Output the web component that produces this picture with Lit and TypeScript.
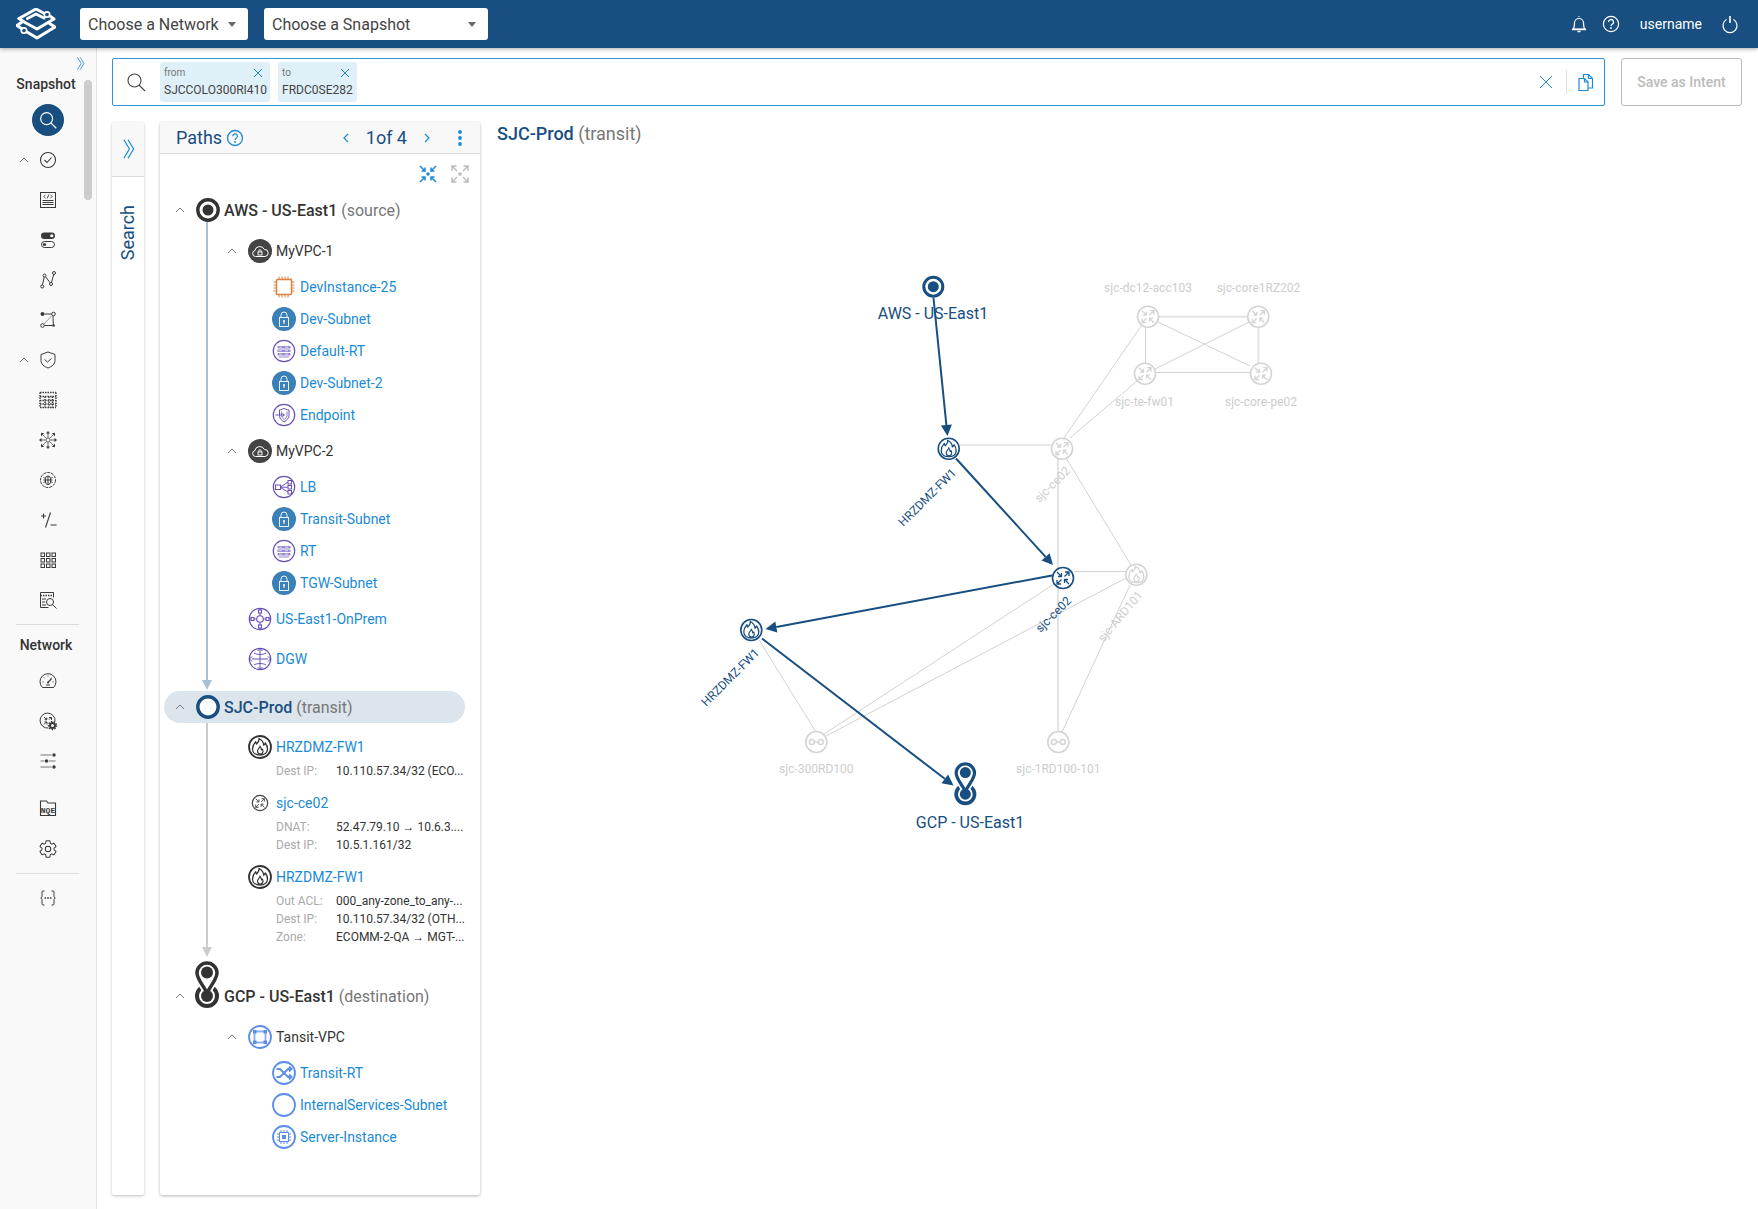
import { LitElement, html, css, svg, nothing } from "lit";
import { customElement } from "lit/decorators.js";

const NAVY = "#184e80";

const arrowsGlyph = svg`<g fill="none" stroke="currentColor" stroke-width="1.300"><path d="M6 6l4.500 4.500M10.500 7v3.500H7"/><path d="M13.500 10.500L18 6M14 6h4v4"/><path d="M10.500 13.500L6 18M6 14v4h4"/><path d="M18 18l-4.500-4.500M17 13.500h-3.500V17"/></g>`;
const routerGlyph = svg`<circle cx="12" cy="12" r="10.500" fill="#fff" stroke="currentColor" stroke-width="1.600"/>${arrowsGlyph}`;
const flame = svg`<path d="M11 3.500c.5 2.500-1 4-2.500 5.500-.5-.8-.8-1.500-.8-2.300C5.500 9 4.500 11.500 4.500 14c0 3.800 3.300 6 7.500 6s7.500-2.200 7.500-6c0-2.500-1-4.500-2.200-6-.3 1-.8 1.700-1.600 2.200C15.700 7.500 13.500 5 11 3.500z" fill="none" stroke="currentColor" stroke-width="1.300" stroke-linejoin="round"/><path d="M12 11c.3 1.500-2.500 2.700-2.500 5 0 1.800 1.200 3 2.800 3s2.700-1.200 2.700-3c0-.8-.3-1.500-.7-2-.2.500-.5.800-.9 1-.1-1.500-.7-3-1.400-4z" fill="none" stroke="currentColor" stroke-width="1.100" stroke-linejoin="round"/>`;
const fireGlyph = svg`<circle cx="12" cy="12" r="10.500" fill="#fff" stroke="currentColor" stroke-width="1.600"/>${flame}`;
const switchGlyph = svg`<circle cx="12" cy="12" r="10.500" fill="#fff" stroke="currentColor" stroke-width="1.600"/><g fill="none" stroke="currentColor" stroke-width="1.500"><circle cx="7.500" cy="12" r="2.500"/><circle cx="16.500" cy="12" r="2.500"/><path d="M10 12h4"/></g>`;

function pinGlyph() {
  return svg`<circle cx="12" cy="35" r="10" fill="#fff" stroke="currentColor" stroke-width="4"/>
  <path d="M12 2C6.500 2 2 6.500 2 12c0 6 6 12 10 20 4-8 10-14 10-20C22 6.500 17.500 2 12 2z" fill="#fff" stroke="#fff" stroke-width="7"/>
  <circle cx="12" cy="35" r="6" fill="currentColor"/>
  <path d="M12 2C6.500 2 2 6.500 2 12c0 6 6 12 10 20 4-8 10-14 10-20C22 6.500 17.500 2 12 2z" fill="#fff" stroke="currentColor" stroke-width="3.500"/><circle cx="12" cy="11.500" r="6" fill="currentColor"/>`;
}

const P = "#6a4fb8";
const B = "#5b8dea";
const treeIcons: Record<string, unknown> = {
  cloud: svg`<circle cx="12" cy="12" r="12" fill="#444"/><path d="M7.500 17.500a3 3 0 0 1-.6-5.900A5 5 0 0 1 16.400 10.500a3.500 3.500 0 0 1 .6 7z" fill="none" stroke="#fff" stroke-width="1"/><rect x="10" y="13" width="4" height="3" fill="none" stroke="#fff" stroke-width=".9"/><path d="M10.800 13v-1a1.200 1.200 0 0 1 2.400 0v1" fill="none" stroke="#fff" stroke-width=".9"/>`,
  chip: svg`<rect x="4.500" y="4.500" width="15" height="15" rx="1" fill="#fff" stroke="#e0803e" stroke-width="1.500"/><path d="M7 1.500v3M10 1.500v3M13 1.500v3M16 1.500v3M19 3v1M7 19.500v3M10 19.500v3M13 19.500v3M16 19.500v3M1.500 7h3M1.500 10h3M1.500 13h3M1.500 16h3M19.500 7h3M19.500 10h3M19.500 13h3M19.500 16h3" stroke="#e0803e" stroke-width="1"/>`,
  subnet: svg`<circle cx="12" cy="12" r="12" fill="#3b80b9"/><rect x="7.500" y="10.500" width="9" height="9" fill="none" stroke="#fff" stroke-width=".9"/><path d="M9 10.500V8a3 3 0 0 1 6 0v2.500" fill="none" stroke="#fff" stroke-width=".9"/><circle cx="12" cy="14" r="1" fill="#fff"/><path d="M12 14v3" stroke="#fff"/>`,
  rt: svg`<circle cx="12" cy="12" r="10.700" fill="#fff" stroke="${P}" stroke-width="1.200"/><path d="M5.500 7h13v2.500h-13zM5.500 10.500h13V13h-13zM5.500 14h13v2.500h-13z" fill="#9b8cd0"/><path d="M7 8.200h3M13 8.200h3M7 11.700h3M13 11.700h3M7 15.200h3M13 15.200h3" stroke="#fff" stroke-width=".6"/><path d="M7 18h10" stroke="${P}" stroke-width=".7"/>`,
  endpoint: svg`<circle cx="12" cy="12" r="10.700" fill="#fff" stroke="${P}" stroke-width="1.200"/><path d="M7.500 7c2-.4 3.500-1 4.500-1.800 1 .8 2.500 1.400 5 1.800v5.500c0 3-2.500 5-5 6.300-2.500-1.300-4.500-3.300-4.500-6.300z" fill="none" stroke="${P}" stroke-width="1"/><path d="M9.500 8.500v4c0 1.800 1.300 3 2.700 3.800 1.300-.8 2.800-2 2.800-3.800v-4" fill="none" stroke="${P}" stroke-width=".8"/><path d="M3.500 12H12M10.500 10.500L12.500 12l-2 1.500" fill="none" stroke="${P}" stroke-width="1"/>`,
  lb: svg`<circle cx="12" cy="12" r="10.700" fill="#fff" stroke="${P}" stroke-width="1.200"/><g fill="none" stroke="${P}" stroke-width="1"><rect x="3.500" y="10" width="5" height="4.500"/><rect x="16" y="5.500" width="3.500" height="3.500"/><rect x="16" y="10.500" width="3.500" height="3.500"/><rect x="16" y="15.500" width="3.500" height="3.500"/><path d="M8.500 12L16 7M8.500 12.200H16M8.500 12.500L16 17"/></g>`,
  onprem: svg`<circle cx="12" cy="12" r="10.700" fill="#fff" stroke="${P}" stroke-width="1.200"/><g fill="#fff" stroke="${P}" stroke-width="1.100"><path d="M12 2v20M2 12h20"/><circle cx="12" cy="12" r="3.300"/><rect x="10.500" y="3" width="3" height="3"/><rect x="10.500" y="18" width="3" height="3"/><rect x="3" y="10.500" width="3" height="3"/><rect x="18" y="10.500" width="3" height="3"/></g>`,
  dgw: svg`<circle cx="12" cy="12" r="10.700" fill="#fff" stroke="${P}" stroke-width="1.200"/><g fill="none" stroke="${P}" stroke-width="1"><path d="M12 1.500v21M4 12h16"/><path d="M9.500 4L12 1.500 14.500 4M9.500 20L12 22.500 14.500 20M4 9.500L1.500 12 4 14.500M20 9.500l2.500 2.500-2.500 2.500"/><path d="M6 6c3 2 9 2 12 0M6 18c3-2 9-2 12 0"/></g>`,
  fire: svg`<circle cx="12" cy="12" r="11" fill="#fff" stroke="#333" stroke-width="1.800"/><g color="#333">${flame}</g>`,
  router: svg`<circle cx="12" cy="12" r="7.700" fill="#fff" stroke="#444" stroke-width="1.200"/><g color="#444" transform="translate(3.400 3.400) scale(.72)">${arrowsGlyph}</g>`,
  vpc: svg`<circle cx="12" cy="12" r="11" fill="#fff" stroke="${B}" stroke-width="1.800"/><rect x="6.500" y="6.500" width="11" height="11" fill="none" stroke="${B}" stroke-width="1.800" opacity=".75"/><path d="M5 5h3.500v3.500H5zM15.500 5H19v3.500h-3.500zM5 15.500h3.500V19H5zM15.500 15.500H19V19h-3.500z" fill="${B}"/>`,
  shuffle: svg`<circle cx="12" cy="12" r="11" fill="#fff" stroke="${B}" stroke-width="1.800"/><g fill="none" stroke="${B}" stroke-width="1.800"><path d="M4.500 8h3.500l8 8h3.500M4.500 16h3.500l8-8h3.500M17 5.500L19.500 8 17 10.500M17 13.500l2.500 2.500-2.500 2.500"/></g>`,
  blank: svg`<circle cx="12" cy="12" r="11" fill="#fff" stroke="${B}" stroke-width="1.800"/>`,
  server: svg`<circle cx="12" cy="12" r="11" fill="#fff" stroke="${B}" stroke-width="1.800"/><rect x="7.500" y="7.500" width="9" height="9" fill="#fff" stroke="${B}" stroke-width="1"/><rect x="10" y="10" width="4" height="4" fill="${B}"/><path d="M9 5v2M12 5v2M15 5v2M9 17v2M12 17v2M15 17v2M5 9h2M5 12h2M5 15h2M17 9h2M17 12h2M17 15h2" stroke="${B}" stroke-width="1"/>`,
  source: svg`<circle cx="12" cy="12" r="10.200" fill="#fff" stroke="#333" stroke-width="3.400"/><circle cx="12" cy="12" r="5.500" fill="#333"/>`,
  transit: svg`<circle cx="12" cy="12" r="10.200" fill="#fff" stroke="${NAVY}" stroke-width="3.400"/>`,
};

const I = "#3a3a3a";
const sideIcons: Record<string, unknown> = {
  check: svg`<circle cx="12" cy="12" r="7.500" fill="none" stroke="${I}" stroke-width="1.100"/><path d="M8.500 12l2.500 2.500 4.500-5" fill="none" stroke="${I}" stroke-width="1.100"/>`,
  code: svg`<rect x="4.500" y="4.500" width="15" height="15" fill="none" stroke="${I}"/><path d="M9.500 6.800L7.800 8.500l1.700 1.700M14.500 6.800l1.700 1.700-1.700 1.700M12.800 6.500l-1.600 4" fill="none" stroke="${I}" stroke-width=".9"/><path d="M6.500 12.500h11M6.500 14.500h11M6.500 16.500h11" stroke="${I}" stroke-width="1"/>`,
  toggles: svg`<rect x="5" y="4.500" width="14" height="6.500" rx="3.250" fill="${I}"/><circle cx="15.800" cy="7.750" r="1.600" fill="#fff"/><rect x="5.500" y="13.500" width="13" height="6" rx="3" fill="none" stroke="${I}"/><circle cx="8.500" cy="16.500" r="1.600" fill="${I}"/>`,
  path: svg`<g fill="none" stroke="${I}" stroke-width="1"><circle cx="6.200" cy="18.500" r="1.500"/><circle cx="8.500" cy="7.500" r="1.500"/><circle cx="15" cy="16" r="1.500"/><circle cx="18" cy="5" r="1.500"/><path d="M6.500 17l1.700-8M9.500 8.700l4.600 6M15.500 14.500l2.200-8"/></g>`,
  topo: svg`<circle cx="6.500" cy="6" r="2" fill="${I}"/><g fill="#f9f9f9" stroke="${I}" stroke-width="1"><circle cx="17.500" cy="6" r="1.800"/><circle cx="6.500" cy="17.500" r="1.800"/></g><circle cx="17.500" cy="17.500" r="1.300" fill="${I}"/><path d="M8.500 6h7M17 8l.300 9M8.500 17.500h8" stroke="${I}" fill="none"/><path d="M8 16l8-8.500" stroke="#999" fill="none"/>`,
  shield: svg`<path d="M12 4l7 2.500v6c0 3.500-3 6-7 7.500-4-1.500-7-4-7-7.500v-6z" fill="none" stroke="${I}"/><path d="M8.500 11.500l3 2.500 4-3.500" fill="none" stroke="${I}"/>`,
  matrix: svg`<path d="M4 4.500h16M4 19.500h16M4 4.500v15M20 4.500v15M4 8.500h16M4 12.500h16M4 16h16M9 8.500v11M13 8.500v11M16.500 8.500v11" fill="none" stroke="${I}" stroke-width="1.400" stroke-dasharray="1.500 1"/>`,
  flake: svg`<g fill="none" stroke="#666" stroke-width="1"><circle cx="12" cy="12" r="2"/><path d="M12 4v6M12 14v6M4 12h6M14 12h6M6.500 6.500l4 4M17.500 6.500l-4 4M6.500 17.500l4-4M17.500 17.500l-4-4"/></g><g fill="${I}"><path d="M12 3l2 2.500h-4zM12 21l-2-2.500h4zM3 12l2.500-2v4zM21 12l-2.500 2v-4z"/><path d="M5 5h3.200L5 8.200zM19 5v3.200L15.800 5zM5 19v-3.200L8.200 19zM19 19h-3.200L19 15.800z"/></g>`,
  bug: svg`<circle cx="12" cy="12" r="7.500" fill="none" stroke="${I}" stroke-dasharray="3 .8"/><g fill="none" stroke="${I}"><rect x="9.500" y="8" width="5" height="8.500" rx="2.500"/><path d="M9.500 12h5M12 8v8.500M7.500 9.500l2 1M16.500 9.500l-2 1M7.500 12h2M14.500 12h2M7.500 14.500l2-1M16.500 14.500l-2-1"/></g>`,
  plusminus: svg`<path d="M14.500 4.500L9.500 19.500M5 8h5M7.500 5.500v5M14.500 17h6" fill="none" stroke="${I}" stroke-width="1.100"/>`,
  grid: svg`<g fill="none" stroke="${I}"><rect x="5" y="5" width="3.500" height="3.500"/><rect x="10.500" y="5" width="3.500" height="3.500"/><rect x="16" y="5" width="3.500" height="3.500"/><rect x="5" y="10.500" width="3.500" height="3.500"/><rect x="10.500" y="10.500" width="3.500" height="3.500"/><rect x="16" y="10.500" width="3.500" height="3.500"/><rect x="5" y="16" width="3.500" height="3.500"/><rect x="10.500" y="16" width="3.500" height="3.500"/><rect x="16" y="16" width="3.500" height="3.500"/></g>`,
  tablesearch: svg`<path d="M17.500 9.500V4.500h-13v15h8" fill="none" stroke="${I}"/><path d="M4.500 7.500h13" stroke="${I}" stroke-width="1.400" stroke-dasharray="1.500 1"/><path d="M6 11h4M6 14h3M6 17h4" stroke="${I}"/><circle cx="14" cy="14" r="3.500" fill="#f9f9f9" stroke="${I}"/><path d="M16.500 16.500l4 4" stroke="${I}"/>`,
  gauge: svg`<path d="M6.500 18.500a8 8 0 1 1 11 0z" fill="none" stroke="${I}"/><path d="M12 13.500l3.500-4" stroke="${I}" stroke-width="1.200"/><path d="M6.500 13h1M8 8.500l.7.700M12 6.500v1M16 8.500l-.7.700M16.500 13h1M10 16h4" stroke="${I}"/><circle cx="12" cy="13.500" r="1" fill="${I}"/>`,
  routergear: svg`<path d="M12.500 19A7.500 7.500 0 1 1 19 12.500" fill="none" stroke="${I}"/><path d="M8 8l2.800 2.800M10.800 8.600v2.200H8.600M15.500 8L13 10.500M13 8.500h2.500V11M8 15.500L10.500 13M8.500 13h2.500v2.500" fill="none" stroke="${I}"/><circle cx="16.500" cy="16.500" r="2.500" fill="none" stroke="${I}" stroke-width="2"/><circle cx="16.500" cy="16.500" r="4" fill="none" stroke="${I}" stroke-width="1.400" stroke-dasharray="1.400 1.400"/>`,
  sliders: svg`<path d="M4.500 6h11M4.500 12h4M12.500 12h7M4.500 18h11" stroke="#777" stroke-width="1.200"/><circle cx="18" cy="6" r="1.700" fill="${I}"/><circle cx="10.500" cy="12" r="1.700" fill="${I}"/><circle cx="18" cy="18" r="1.700" fill="${I}"/>`,
  nqe: svg`<path d="M4.500 5h6l1.500 2h7.500v12.500h-15z" fill="none" stroke="${I}" stroke-width="1.100"/><text x="12" y="16.500" text-anchor="middle" font-family="Liberation Mono" font-weight="700" font-size="8" fill="${I}">NQE</text>`,
  gear: svg`<g transform="translate(1.800 1.800) scale(.85)"><path d="M19.140 12.940c.04-.3.06-.61.06-.94 0-.32-.02-.64-.07-.94l2.030-1.580c.18-.14.23-.41.12-.61l-1.920-3.320c-.12-.22-.37-.29-.59-.22l-2.390.96c-.5-.38-1.030-.7-1.620-.94L14.400 2.810c-.04-.24-.24-.41-.48-.41h-3.840c-.24 0-.43.17-.47.41L9.250 5.350c-.59.24-1.130.57-1.620.94L5.240 5.330c-.22-.08-.47 0-.59.22L2.740 8.870c-.12.21-.08.47.12.61l2.030 1.580c-.05.3-.09.63-.09.94s.02.64.07.94l-2.030 1.580c-.18.14-.23.41-.12.61l1.920 3.320c.12.22.37.29.59.22l2.390-.96c.5.38 1.030.7 1.620.94l.36 2.540c.05.24.24.41.48.41h3.840c.24 0 .44-.17.47-.41l.36-2.540c.59-.24 1.130-.56 1.620-.94l2.390.96c.22.08.47 0 .59-.22l1.920-3.320c.12-.22.07-.47-.12-.61z" fill="none" stroke="${I}" stroke-width="1.200"/><circle cx="12" cy="12" r="3.200" fill="none" stroke="${I}" stroke-width="1.200"/></g>`,
  braces: svg`<path d="M8.500 5H7c-.6 0-1 .4-1 1v4.500L4.800 12 6 13.500V18c0 .6.400 1 1 1h1.500M15.500 5H17c.6 0 1 .4 1 1v4.500l1.200 1.500-1.200 1.500V18c0 .6-.4 1-1 1h-1.500" fill="none" stroke="${I}"/><path d="M8.500 12h7" stroke="${I}" stroke-width="1.300" stroke-dasharray="1.600 1.100"/>`,
};

interface Row { k: string; t?: string; s?: string; icon?: string; c?: string; rows?: [string, string][]; }

const tree: Row[] = [
  { k: "root", c: "m-a", icon: "source", t: "AWS - US-East1", s: "(source)" },
  { k: "group", c: "m6", icon: "cloud", t: "MyVPC-1" },
  { k: "leaf", c: "m4", icon: "chip", t: "DevInstance-25" },
  { k: "leaf", icon: "subnet", t: "Dev-Subnet" },
  { k: "leaf", icon: "rt", t: "Default-RT" },
  { k: "leaf", icon: "subnet", t: "Dev-Subnet-2" },
  { k: "leaf", icon: "endpoint", t: "Endpoint" },
  { k: "group", c: "m4", icon: "cloud", t: "MyVPC-2" },
  { k: "leaf", c: "m4", icon: "lb", t: "LB" },
  { k: "leaf", icon: "subnet", t: "Transit-Subnet" },
  { k: "leaf", icon: "rt", t: "RT" },
  { k: "leaf", icon: "subnet", t: "TGW-Subnet" },
  { k: "device", c: "m4", icon: "onprem", t: "US-East1-OnPrem" },
  { k: "device", c: "m8", icon: "dgw", t: "DGW" },
  { k: "pill", c: "m16", icon: "transit", t: "SJC-Prod", s: "(transit)" },
  { k: "hop", c: "m9", icon: "fire", t: "HRZDMZ-FW1", rows: [["Dest IP:", "10.110.57.34/32 (ECO..."]] },
  { k: "hop", c: "m8", icon: "router", t: "sjc-ce02", rows: [["DNAT:", "52.47.79.10 → 10.6.3...."], ["Dest IP:", "10.5.1.161/32"]] },
  { k: "hop", c: "m8", icon: "fire", t: "HRZDMZ-FW1", rows: [["Out ACL:", "000_any-zone_to_any-..."], ["Dest IP:", "10.110.57.34/32 (OTH..."], ["Zone:", "ECOMM-2-QA → MGT-..."]] },
  { k: "dest", c: "m32", t: "GCP - US-East1", s: "(destination)" },
  { k: "group", c: "m6", icon: "vpc", t: "Tansit-VPC" },
  { k: "leaf", c: "m4", icon: "shuffle", t: "Transit-RT" },
  { k: "leaf", icon: "blank", t: "InternalServices-Subnet" },
  { k: "leaf", icon: "server", t: "Server-Instance" },
];

const DIM = "#d4d4d4";
const dimNodes: [string, number, number][] = [
  ["r", 1148, 316.7], ["r", 1258.3, 316.7], ["r", 1145, 373.7], ["r", 1261, 373.7],
  ["r", 1062, 448.7], ["f", 1136.3, 574.7], ["s", 816.3, 742], ["s", 1058.3, 742],
];
const activeNodes: [string, number, number][] = [["f", 948.7, 448.7], ["r", 1063, 578], ["f", 751.3, 630]];
const thinLines = [
  [1145.5, 327, 1145.5, 363], [1158, 322, 1250, 366], [1249, 322, 1155, 369], [1155, 372.5, 1251, 372.5],
  [1141, 326, 1064, 438], [1137, 381, 1070, 438], [960, 445, 1052, 445], [1066, 458, 1131, 565],
  [1074, 571.5, 1126, 571.5], [1126, 578, 826, 736], [1054, 584, 824, 734], [759, 640, 816, 732], [1130, 585, 1062, 732],
];
const thickLines = [[1158, 316.7, 1248, 316.7], [1258.3, 327, 1258.3, 363], [1058, 459, 1058, 732]];
const arrows = [[933.5, 298, 947.5, 436], [956, 458.5, 1053, 565], [1052, 575.5, 765.5, 629], [762, 638.5, 953.5, 785.5]];
const dimLabels: [string, number, number][] = [
  ["sjc-dc12-acc103", 1148, 289], ["sjc-core1RZ202", 1258.5, 289], ["sjc-te-fw01", 1144.5, 403], ["sjc-core-pe02", 1261, 403],
  ["sjc-300RD100", 816.3, 770], ["sjc-1RD100-101", 1058.3, 770],
];
const rotLabels: [string, number, number, string, number][] = [
  ["HRZDMZ-FW1", 928, 498, "active", -45], ["sjc-ce02", 1053, 485, "dim", -45], ["HRZDMZ-FW1", 731, 678, "active", -45],
  ["sjc-ce02", 1054, 615, "active", -45], ["sjc-ARD101", 1121, 617, "dim", -50],
];

function arrow(a: number[]) {
  const [x1, y1, x2, y2] = a;
  const L = Math.hypot(x2 - x1, y2 - y1), ux = (x2 - x1) / L, uy = (y2 - y1) / L;
  const bx = x2 - ux * 11, by = y2 - uy * 11;
  return svg`<line x1=${x1} y1=${y1} x2=${bx} y2=${by} stroke=${NAVY} stroke-width="2"/>
  <polygon points="${x2},${y2} ${bx - uy * 5.5},${by + ux * 5.5} ${bx + uy * 5.5},${by - ux * 5.5}" fill=${NAVY}/>`;
}
const glyph = (k: string) => (k === "r" ? routerGlyph : k === "f" ? fireGlyph : switchGlyph);

const chevUp = html`<svg class="chev" viewBox="0 0 16 16"><path d="M4 10l4-4 4 4" fill="none" stroke="#777" stroke-width="1"/></svg>`;
const dbl = (c: string) => html`<svg class="dbl" viewBox="0 0 14 24"><path d="M2 2l6 10-6 10M6.500 2l6 10-6 10" fill="none" stroke=${c} stroke-width="1.300"/></svg>`;

@customElement("app-root")
export class AppRoot extends LitElement {
  static styles = css`
    :host { display: block; width: 1758px; height: 1209px; overflow: hidden; background: #fff; font-family: Roboto, "Liberation Sans", sans-serif; color: #333; }
    svg { display: block; }
    .top { height: 48px; background: #184e80; display: flex; align-items: center; position: relative; z-index: 2; box-shadow: 0 1px 4px rgba(0,0,0,.35); }
    .logo { width: 40px; height: 32px; margin-left: 16px; margin-right: 24px; }
    .select { height: 32px; background: #fff; border-radius: 3px; display: flex; align-items: center; justify-content: space-between; padding: 0 12px 0 8px; font-size: 16px; color: #444; box-sizing: border-box; }
    .select.a { width: 168px; margin-right: 16px; }
    .select.b { width: 224px; }
    .caret { width: 0; height: 0; border: 4.500px solid transparent; border-top: 5px solid #666; border-bottom: 0; }
    .top-right { margin-left: auto; display: flex; align-items: center; color: #fff; font-size: 14px; padding-right: 16px; }
    .top-right svg { width: 24px; height: 24px; }
    .username { margin: 0 16px 0 17px; }
    .bell { margin-right: 8px; }
    .body { display: flex; height: 1161px; }
    .side { width: 97px; flex: none; box-sizing: border-box; background: #f9f9f9; border-right: 1px solid #e4e4e4; position: relative; padding-top: 8px; }
    .side-toggle { height: 16px; display: flex; justify-content: flex-end; padding-right: 10px; }
    .side-toggle .dbl { width: 11px; height: 15px; }
    .side-title { font-size: 14px; font-weight: 500; height: 20px; line-height: 20px; margin-top: 2px; text-align: center; padding-right: 4px; color: #333; }
    .scrollbar { position: absolute; left: 84px; top: 32px; width: 8px; height: 120px; border-radius: 4px; background: #ccc; }
    .search-btn { width: 32px; height: 32px; border-radius: 50%; background: #184e80; margin: 10px 0 4px 32px; display: flex; align-items: center; justify-content: center; }
    .search-btn svg { width: 22px; height: 22px; }
    .side-row { height: 40px; display: grid; grid-template-columns: 16px 24px; column-gap: 4px; align-items: center; padding-left: 16px; }
    .chev { width: 16px; height: 16px; }
    .side-row svg.icon { width: 24px; height: 24px; }
    .side-row.s2 { margin-top: 7px; }
    .side-row.s3 { margin-top: 1px; }
    .divider { height: 1px; background: #ddd; margin: 4px 17px 4px 16px; }
    .side-net { font-size: 14px; font-weight: 500; height: 20px; line-height: 20px; text-align: center; padding-right: 4px; margin: 10px 0 6px; }
    .main { flex: 1; min-width: 0; padding: 10px 16px 0 15px; display: flex; flex-direction: column; }
    .search-row { display: flex; gap: 16px; height: 48px; }
    .searchbar { flex: 1; border: 1px solid #2a97d9; border-radius: 2px; display: flex; align-items: center; box-sizing: border-box; padding-left: 11px; }
    .searchbar > svg { width: 24px; height: 24px; }
    .chips { display: flex; gap: 8px; margin-left: 12px; }
    .chip { background: #dff0f9; border-radius: 3px; height: 40px; padding: 2px 3px 0 4px; box-sizing: border-box; font-size: 12px; line-height: 16px; color: #444; }
    .chip.to { width: 79px; }
    .chip-top { display: flex; justify-content: space-between; align-items: center; font-size: 10px; color: #777; height: 18px; }
    .chip-top svg { width: 12px; height: 12px; margin-right: 3px; }
    .bar-x { width: 16px !important; height: 16px !important; margin-left: auto; }
    .bar-sep { width: 1px; height: 24px; background: #ddd; margin: 0 9px 0 12px; }
    .bar-clip { width: 20px !important; height: 20px !important; margin-right: 8px; }
    .save { width: 121px; border: 1px solid #bbb; border-radius: 3px; box-sizing: border-box; display: flex; align-items: center; justify-content: center; font-size: 14px; font-weight: 500; color: #bbb; }
    .content { flex: 1; display: flex; gap: 16px; margin-top: 16px; margin-bottom: 14px; min-height: 0; }
    .tab { width: 32px; background: #fff; box-shadow: 0 1px 3px rgba(0,0,0,.25); border-radius: 2px; }
    .tab-top { height: 54px; background: #f8f8f8; border-bottom: 1px solid #ddd; display: flex; align-items: center; justify-content: center; }
    .tab-top .dbl { width: 13px; height: 24px; }
    .tab-label-wrap { display: flex; justify-content: center; }
    .tab-label { writing-mode: vertical-rl; transform: rotate(180deg); font-size: 18px; color: #184e80; margin: 28px 2px 0 0; line-height: 21px; }
    .panel { width: 320px; flex: none; box-shadow: 0 1px 3px rgba(0,0,0,.3); border-radius: 2px; background: #fff; display: flex; flex-direction: column; }
    .panel-head { height: 32px; box-sizing: border-box; background: #f8f8f8; border-bottom: 1px solid #ddd; display: flex; align-items: center; padding-left: 16px; font-size: 18px; color: #184e80; }
    .panel-head .q { width: 18px; height: 18px; margin-left: 4px; }
    .pager { margin-left: auto; display: flex; align-items: center; }
    .pager .c { width: 12px; height: 12px; }
    .pager .of { margin: 0 14px; }
    .pager .dots { width: 4px; height: 16px; margin: 0 18px 0 25px; }
    .tree { position: relative; flex: 1; }
    .tools { height: 38px; display: flex; justify-content: flex-end; align-items: flex-start; gap: 14px; padding: 11px 11px 0 0; box-sizing: border-box; }
    .tools svg { width: 18px; height: 18px; }
    .row { display: flex; align-items: center; position: relative; z-index: 1; }
    .row svg.ti { width: 24px; height: 24px; flex: none; }
    .row.root, .row.dest { height: 36px; padding-left: 12px; font-size: 16px; font-weight: 500; color: #333; }
    .row.pill { height: 32px; margin-left: 4px; width: 301px; padding-left: 8px; box-sizing: border-box; font-size: 16px; font-weight: 500; background: #dce4ec; border-radius: 16px; color: #184e80; }
    .row.group { height: 32px; padding-left: 64px; font-size: 14px; color: #333; }
    .row.leaf { height: 32px; padding-left: 112px; font-size: 14px; color: #1a8ad6; }
    .row.device { height: 32px; padding-left: 88px; font-size: 14px; color: #1a8ad6; }
    .row.hop { height: 30px; padding-left: 88px; font-size: 14px; color: #1a8ad6; }
    .row .chev { margin-right: 8px; flex: none; }
    .row .txt { margin-left: 4px; white-space: nowrap; }
    .row.dest .slot { width: 24px; height: 24px; flex: none; position: relative; }
    .pin { position: absolute; left: -1px; bottom: 0; width: 24px; height: 47px; color: #333; }
    .sub { font-weight: 400; color: #777; }
    .m-a { margin-top: 0; } .m4 { margin-top: 4px; } .m6 { margin-top: 7px; } .m8 { margin-top: 8px; } .m9 { margin-top: 9px; } .m16 { margin-top: 16px; } .m32 { margin-top: 32px; }
    .detail { display: grid; grid-template-columns: 60px auto; height: 18px; line-height: 18px; font-size: 12px; padding-left: 116px; white-space: nowrap; }
    .detail span:first-child { color: #aaa; }
    .detail span:last-child { color: #333; }
    .conn { position: absolute; left: 46px; width: 2px; z-index: 0; }
    .conn.one { top: 68px; height: 458px; background: #aac0d4; }
    .conn.two { top: 569px; height: 225px; background: #ccc; }
    .head { position: absolute; left: 41.5px; width: 0; height: 0; border-left: 5.5px solid transparent; border-right: 5.5px solid transparent; border-top: 10px solid; z-index: 0; }
    .head.one { top: 526px; border-top-color: #aac0d4; }
    .head.two { top: 793px; border-top-color: #ccc; }
    .graph { flex: 1; min-width: 0; display: flex; flex-direction: column; }
    .graph-title { height: 24px; line-height: 24px; padding-left: 1px; font-size: 18px; font-weight: 500; color: #184e80; }
    .graph-title .sub { font-size: 18px; }
    .canvas { width: 1245px; height: 1049px; overflow: visible; }
    .canvas text { font-family: Roboto, "Liberation Sans", sans-serif; }
    .lbl { font-size: 12px; text-anchor: middle; dominant-baseline: middle; }
    .lbl.dim { fill: #cdcdcd; }
    .lbl.active { fill: #184e80; }
    .big { font-size: 16px; text-anchor: middle; fill: #184e80; }
  `;

  private renderRow(r: Row) {
    const iconSvg = r.icon ? html`<svg class="ti" viewBox="0 0 24 24">${treeIcons[r.icon]}</svg>` : nothing;
    const chev = ["root", "group", "pill", "dest"].includes(r.k) ? chevUp : nothing;
    const icon = r.k === "dest"
      ? html`<span class="slot"><svg class="pin" viewBox="0 0 24 47">${pinGlyph()}</svg></span>`
      : iconSvg;
    return html`<div class="row ${r.k} ${r.c ?? ""}">${chev}${icon}<span class="txt">${r.t} ${r.s ? html`<span class="sub">${r.s}</span>` : nothing}</span></div>
    ${(r.rows ?? []).map((d) => html`<div class="detail"><span>${d[0]}</span><span>${d[1]}</span></div>`)}`;
  }

  private sideRow(icon: string, chev = false, cls = "") {
    return html`<div class="side-row ${cls}">${chev ? chevUp : html`<span></span>`}<svg class="icon" viewBox="0 0 24 24">${sideIcons[icon]}</svg></div>`;
  }

  render() {
    return html`
      <div class="top">
        <svg class="logo" viewBox="16 8 40 32">
          <g fill="none" stroke="#fff" stroke-width="3" stroke-linejoin="round" stroke-linecap="round">
            <path d="M19 18.500L36 9l7.500 4"/>
            <path d="M50.500 16.500L54 19 37 29l-12-6.500-6-4"/>
            <path d="M27.500 18.500L36 14l8 4"/>
            <path d="M22 22l-5 3.500 4.500 3"/>
            <path d="M27 32l10 6 18-11-5.500-3.500"/>
          </g>
          <circle cx="47" cy="14.500" r="2.700" fill="none" stroke="#fff" stroke-width="1.700"/>
          <circle cx="24" cy="30.500" r="2.700" fill="none" stroke="#fff" stroke-width="1.700"/>
        </svg>
        <div class="select a">Choose a Network<span class="caret"></span></div>
        <div class="select b">Choose a Snapshot<span class="caret"></span></div>
        <div class="top-right">
          <svg class="bell" viewBox="0 0 24 24"><path d="M6 17c1.500-1.500 1.500-3 1.500-6a4.500 4.500 0 0 1 9 0c0 3 0 4.500 1.500 6z" fill="none" stroke="#fff" stroke-width="1.200"/><path d="M5 17.500h14" stroke="#fff" stroke-width="1.500"/><path d="M10.500 19.500h3" stroke="#fff" stroke-width="1.500"/><path d="M12 5V4" stroke="#fff"/></svg>
          <svg viewBox="0 0 24 24"><circle cx="12" cy="12" r="7.600" fill="none" stroke="#fff" stroke-width="1.200"/><path d="M9.500 10a2.500 2.500 0 1 1 3.700 2.200c-.8.500-1.200 1-1.200 1.800" fill="none" stroke="#fff" stroke-width="1.300"/><circle cx="12" cy="16" r=".9" fill="#fff"/></svg>
          <span class="username">username</span>
          <svg viewBox="0 0 24 24"><path d="M8.500 7.500a7 7 0 1 0 7 0" fill="none" stroke="#fff" stroke-width="1.200"/><path d="M12 4v7" stroke="#fff" stroke-width="1.600"/></svg>
        </div>
      </div>
      <div class="body">
        <aside class="side">
          <div class="scrollbar"></div>
          <div class="side-toggle">${dbl("#1a8ad6")}</div>
          <div class="side-title">Snapshot</div>
          <div class="search-btn"><svg viewBox="0 0 24 24"><circle cx="10.500" cy="10.500" r="6.500" fill="none" stroke="#fff" stroke-width="1.300"/><path d="M15 15l6 6" stroke="#fff" stroke-width="1.300"/></svg></div>
          ${this.sideRow("check", true)}${this.sideRow("code")}${this.sideRow("toggles")}${this.sideRow("path")}${this.sideRow("topo")}
          ${this.sideRow("shield", true)}${this.sideRow("matrix")}${this.sideRow("flake")}${this.sideRow("bug")}${this.sideRow("plusminus")}${this.sideRow("grid")}${this.sideRow("tablesearch")}
          <div class="divider"></div>
          <div class="side-net">Network</div>
          ${this.sideRow("gauge")}${this.sideRow("routergear")}${this.sideRow("sliders")}
          ${this.sideRow("nqe", false, "s2")}${this.sideRow("gear", false, "s3")}
          <div class="divider"></div>
          ${this.sideRow("braces")}
        </aside>
        <main class="main">
          <div class="search-row">
            <div class="searchbar">
              <svg viewBox="0 0 24 24"><circle cx="10.500" cy="10.500" r="6.500" fill="none" stroke="#444" stroke-width="1.100"/><path d="M15 15l6 6" stroke="#444" stroke-width="1.100"/></svg>
              <div class="chips">
                <div class="chip"><div class="chip-top">from<svg viewBox="0 0 12 12"><path d="M2 2l8 8M10 2l-8 8" stroke="#1a8ad6"/></svg></div><div>SJCCOLO300RI410</div></div>
                <div class="chip to"><div class="chip-top">to<svg viewBox="0 0 12 12"><path d="M2 2l8 8M10 2l-8 8" stroke="#1a8ad6"/></svg></div><div>FRDC0SE282</div></div>
              </div>
              <svg class="bar-x" viewBox="0 0 16 16"><path d="M2 2l12 12M14 2L2 14" stroke="#1a8ad6" stroke-width="1"/></svg>
              <span class="bar-sep"></span>
              <svg class="bar-clip" viewBox="0 0 20 20"><g fill="none" stroke="#1a8ad6" stroke-width="1.200"><path d="M3 6.500h5.500l3.500 3.500v8.500H3z"/><path d="M7.500 6V2.500h5l4 4V16H12"/><path d="M12.500 2.500v4h4M8.500 6.500V10H12"/></g></svg>
            </div>
            <div class="save">Save as Intent</div>
          </div>
          <div class="content">
            <div class="tab">
              <div class="tab-top">${dbl("#1a8ad6")}</div>
              <div class="tab-label-wrap"><span class="tab-label">Search</span></div>
            </div>
            <section class="panel">
              <div class="panel-head">
                Paths
                <svg class="q" viewBox="0 0 18 18"><circle cx="9" cy="9" r="7.500" fill="none" stroke="#1a8ad6" stroke-width="1.300"/><path d="M6.800 7.200a2.300 2.300 0 1 1 3.400 2c-.8.500-1.200 1-1.200 1.800" fill="none" stroke="#1a8ad6" stroke-width="1.300"/><circle cx="9" cy="13" r=".9" fill="#1a8ad6"/></svg>
                <div class="pager">
                  <svg class="c" viewBox="0 0 12 12"><path d="M8 2L4 6l4 4" fill="none" stroke="#1a8ad6" stroke-width="1.200"/></svg>
                  <span class="of">1of 4</span>
                  <svg class="c" viewBox="0 0 12 12"><path d="M4 2l4 4-4 4" fill="none" stroke="#1a8ad6" stroke-width="1.200"/></svg>
                  <svg class="dots" viewBox="0 0 4 16"><circle cx="2" cy="2" r="1.900" fill="#1a8ad6"/><circle cx="2" cy="8" r="1.900" fill="#1a8ad6"/><circle cx="2" cy="14" r="1.900" fill="#1a8ad6"/></svg>
                </div>
              </div>
              <div class="tree">
                <span class="conn one"></span><span class="head one"></span>
                <span class="conn two"></span><span class="head two"></span>
                <div class="tools">
                  <svg viewBox="0 0 18 18"><g fill="none" stroke="#1a8ad6" stroke-width="1.500"><path d="M1 1l5 5M6 2.500V6H2.500M17 1l-5 5M12 2.500V6h3.500M1 17l5-5M2.500 12H6v3.500M17 17l-5-5M12 15.500V12h3.500"/></g><circle cx="9" cy="9" r="1.800" fill="#1a8ad6"/></svg>
                  <svg viewBox="0 0 18 18"><g fill="none" stroke="#bbb" stroke-width="1.500"><path d="M2 2l4 4M1 5.500V1h4.500M16 2l-4 4M12.500 1H17v4.500M2 16l4-4M1 12.500V17h4.500M16 16l-4-4M12.500 17H17v-4.500"/></g><circle cx="9" cy="9" r="1.800" fill="#bbb"/></svg>
                </div>
                ${tree.map((r) => this.renderRow(r))}
              </div>
            </section>
            <section class="graph">
              <div class="graph-title">SJC-Prod <span class="sub">(transit)</span></div>
              <svg class="canvas" viewBox="496 146 1245 1049">
                ${thinLines.map((l) => svg`<line x1=${l[0]} y1=${l[1]} x2=${l[2]} y2=${l[3]} stroke="#d2d2d2" stroke-width="1"/>`)}
                ${thickLines.map((l) => svg`<line x1=${l[0]} y1=${l[1]} x2=${l[2]} y2=${l[3]} stroke="#e4e4e4" stroke-width="2"/>`)}
                ${dimNodes.map((n) => svg`<g transform="translate(${n[1] - 12} ${n[2] - 12})" color=${DIM}>${glyph(n[0])}</g>`)}
                ${dimLabels.map((l) => svg`<text class="lbl dim" x=${l[1]} y=${l[2]}>${l[0]}</text>`)}
                ${rotLabels.map((l) => svg`<text class="lbl ${l[3]}" transform="translate(${l[1]} ${l[2]}) rotate(${l[4]})">${l[0]}</text>`)}
                <text class="big" x="933" y="319">AWS - US-East1</text>
                <text class="big" x="970" y="828">GCP - US-East1</text>
                ${arrows.map((a) => arrow(a))}
                ${activeNodes.map((n) => svg`<g transform="translate(${n[1] - 12} ${n[2] - 12})" color=${NAVY}>${glyph(n[0])}</g>`)}
                <circle cx="933.3" cy="286.7" r="9.5" fill="#fff" stroke=${NAVY} stroke-width="3"/><circle cx="933.3" cy="286.7" r="5.5" fill=${NAVY}/>
                <g transform="translate(954.3 762) scale(.92)" color=${NAVY}>${pinGlyph()}</g>
              </svg>
            </section>
          </div>
        </main>
      </div>
    `;
  }
}
